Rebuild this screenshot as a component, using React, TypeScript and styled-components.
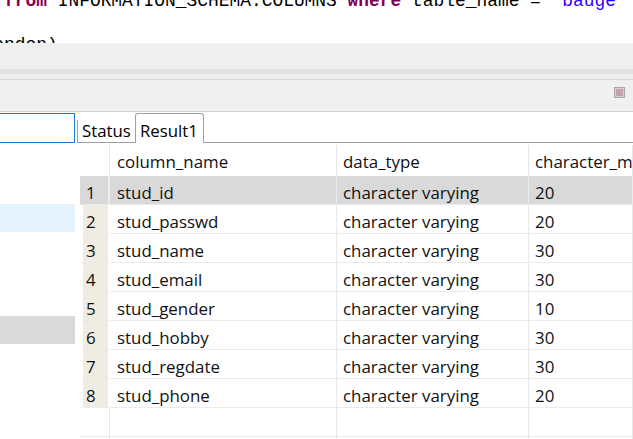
import React from 'react';
import styled, { createGlobalStyle } from 'styled-components';

const GlobalStyle = createGlobalStyle`
	html, body {
		margin: 0;
		padding: 0;
		background: #fff;
		overflow: hidden;
	}
	body {
		width: 633px;
		height: 439px;
		font-family: 'Open Sans', 'Noto Sans', sans-serif;
		color: #1a1a1a;
	}
`;

const rows = [
	{ name: 'stud_id', type: 'character varying', len: '20' },
	{ name: 'stud_passwd', type: 'character varying', len: '20' },
	{ name: 'stud_name', type: 'character varying', len: '30' },
	{ name: 'stud_email', type: 'character varying', len: '30' },
	{ name: 'stud_gender', type: 'character varying', len: '10' },
	{ name: 'stud_hobby', type: 'character varying', len: '30' },
	{ name: 'stud_regdate', type: 'character varying', len: '30' },
	{ name: 'stud_phone', type: 'character varying', len: '20' },
];

const treeRows = ['', '', 'hover', '', '', '', 'selected', ''];

function MaximizeIcon() {
	return (
		<svg width='11' height='11' viewBox='0 0 11 11'>
			<rect x='0.5' y='0.5' width='10' height='10' fill='#dccbd1' stroke='#a7a7a7' />
			<rect x='2' y='2' width='7' height='7' fill='#c6a0ae' />
		</svg>
	);
}

export default function App() {
	return (
		<>
			<GlobalStyle />
			<Page>
				<Editor>
					<CodeLine>
						<Keyword>from</Keyword> INFORMATION_SCHEMA.COLUMNS <Keyword>where</Keyword> table_name = <Str>'bauge</Str>
					</CodeLine>
					<BlankLine />
					<CodeLine $shift>ondon)</CodeLine>
				</Editor>

				<Sash />
				<ScrollTrack />
				<SashGap />

				<Toolbar>
					<MaximizeIcon />
				</Toolbar>

				<Body>
					<Navigator>
						<SearchBox />
						<TreeList>
							{treeRows.map((state, i) => (
								<TreeRow key={i} $state={state} />
							))}
						</TreeList>
					</Navigator>

					<ResultPanel>
						<TabStrip>
							<Tab>Status</Tab>
							<Tab $active>Result1</Tab>
							<TabFiller />
						</TabStrip>

						<Grid>
							<HeadCell />
							<HeadCell>column_name</HeadCell>
							<HeadCell>data_type</HeadCell>
							<HeadCell>character_maximum_length</HeadCell>

							{rows.map((row, i) => (
								<React.Fragment key={row.name}>
									<RowNum $selected={i === 0}>{i + 1}</RowNum>
									<Cell $selected={i === 0}>{row.name}</Cell>
									<Cell $selected={i === 0}>{row.type}</Cell>
									<Cell $selected={i === 0}>{row.len}</Cell>
								</React.Fragment>
							))}

							{[0, 1].map((i) => (
								<React.Fragment key={'empty' + i}>
									<EmptyNum />
									<Cell />
									<Cell />
									<Cell />
								</React.Fragment>
							))}
						</Grid>
					</ResultPanel>
				</Body>
			</Page>
		</>
	);
}

const Page = styled.div`
	width: 633px;
	height: 439px;
	display: flex;
	flex-direction: column;
	overflow: hidden;
`;

const Editor = styled.div`
	height: 43px;
	overflow: hidden;
	background: #fff;
	flex-shrink: 0;
`;

const CodeLine = styled.div<{ $shift?: boolean }>`
	font-family: 'Liberation Mono', 'DejaVu Sans Mono', monospace;
	font-size: 17.9px;
	line-height: 18.5px;
	white-space: pre;
	color: #000;
	margin-left: ${(p) => (p.$shift ? '-6.7px' : '4px')};

	&:first-child {
		margin-top: -8px;
	}
`;

const BlankLine = styled.div`
	height: 25px;
`;

const Keyword = styled.span`
	color: #7f0055;
	font-weight: bold;
`;

const Str = styled.span`
	color: #2a00ff;
`;

const Sash = styled.div`
	height: 26px;
	background: #efefef;
	flex-shrink: 0;
`;

const ScrollTrack = styled.div`
	height: 5px;
	background: #e2e2e2;
	flex-shrink: 0;
`;

const SashGap = styled.div`
	height: 5px;
	background: #efefef;
	border-bottom: 1px solid #d5d5d5;
	flex-shrink: 0;
`;

const Toolbar = styled.div`
	background: #f0f0f0;
	border-bottom: 1px solid #d2d2d2;
	display: flex;
	justify-content: flex-end;
	align-items: flex-start;
	padding: 7px 8px 0 0;
	box-sizing: content-box;
	height: 24px;
	flex-shrink: 0;
`;

const Body = styled.div`
	flex: 1;
	display: flex;
	padding-top: 1px;
	min-height: 0;
`;

const Navigator = styled.div`
	width: 75px;
	flex-shrink: 0;
	overflow: hidden;
`;

const SearchBox = styled.div`
	margin-left: -2px;
	width: 77px;
	height: 30px;
	box-sizing: border-box;
	border: 1px solid #1b78cc;
	background: #fff;
`;

const TreeList = styled.div`
	margin-top: 5px;
	display: flex;
	flex-direction: column;
`;

const TreeRow = styled.div<{ $state: string }>`
	height: 28px;
	background: ${(p) =>
		p.$state === 'hover' ? '#e5f3ff' : p.$state === 'selected' ? '#d9d9d9' : '#fff'};
`;

const ResultPanel = styled.div`
	flex: 1;
	margin-left: 2px;
	display: flex;
	flex-direction: column;
	min-width: 0;
	overflow: hidden;
`;

const TabStrip = styled.div`
	height: 30px;
	display: flex;
	flex-shrink: 0;
	font-size: 16.8px;
`;

const Tab = styled.div<{ $active?: boolean }>`
	position: relative;
	box-sizing: border-box;
	height: 30px;
	line-height: 23px;
	color: #000;
	white-space: nowrap;
	${(p) =>
		p.$active
			? `
		padding: 5px 5px 0 4px;
		border: 1px solid #a0a0a0;
		border-bottom: none;
		border-radius: 3px 3px 0 0;
		background: #fff;
	`
			: `
		padding: 6px 5px 0 5px;
		width: 58px;
		border-bottom: 1px solid #a0a0a0;
		&::before {
			content: '';
			position: absolute;
			left: 0;
			bottom: 0;
			width: 1px;
			height: 22px;
			background: #a0a0a0;
		}
	`}
`;

const TabFiller = styled.div`
	flex: 1;
	border-bottom: 1px solid #a0a0a0;
`;

const Grid = styled.div`
	margin-left: 3px;
	display: grid;
	grid-template-columns: 30px 227px 192px 1fr;
	grid-auto-rows: 29px;
	grid-template-rows: 33px;
	font-size: 16.9px;
	color: #111;
	white-space: nowrap;
`;

const HeadCell = styled.div`
	margin-top: 2px;
	height: 31px;
	box-sizing: border-box;
	padding: 5px 0 0 7px;
	line-height: 23px;
	border-right: 1px solid #e6e6e6;
	overflow: hidden;

	&:nth-child(4n + 3),
	&:nth-child(4n + 4) {
		padding-left: 6px;
	}
`;

const Cell = styled.div<{ $selected?: boolean }>`
	box-sizing: border-box;
	padding: 5px 0 0 7px;
	line-height: 23px;
	background: ${(p) => (p.$selected ? '#d9d9d9' : '#fff')};
	border-right: 1px solid ${(p) => (p.$selected ? '#ececec' : '#e8e8e8')};
	border-bottom: 1px solid #ebebeb;
	overflow: hidden;

	&:nth-child(4n + 3),
	&:nth-child(4n + 4) {
		padding-left: 6px;
	}
`;

const RowNum = styled.div<{ $selected?: boolean }>`
	box-sizing: border-box;
	padding: 5px 0 0 3px;
	line-height: 23px;
	background: ${(p) => (p.$selected ? '#d9d9d9' : '#efede3')};
	border-left: 3px solid ${(p) => (p.$selected ? '#d9d9d9' : '#fff')};
	border-right: 2px solid ${(p) => (p.$selected ? '#ececec' : '#fff')};
	border-bottom: 1px solid #ebebeb;
`;

const EmptyNum = styled.div`
	border-right: 1px solid #e8e8e8;
	border-bottom: 1px solid #ebebeb;
`;
